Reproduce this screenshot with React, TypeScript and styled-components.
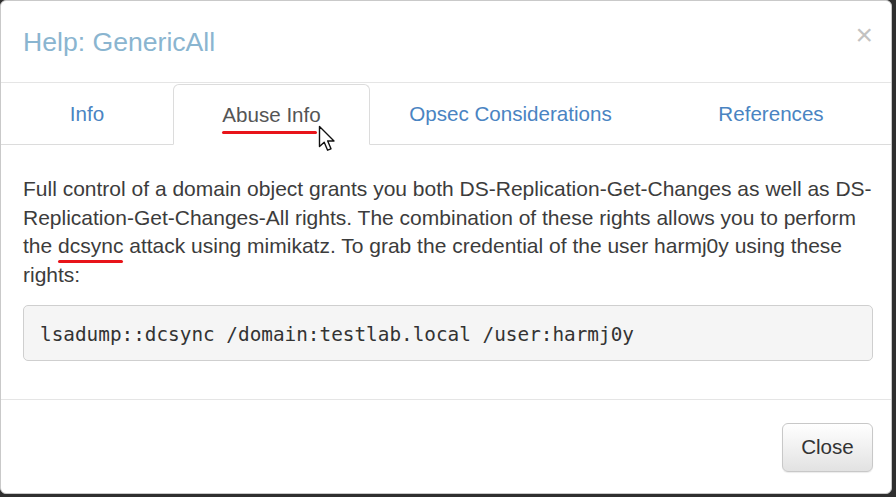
import React from "react";
import styled, { createGlobalStyle } from "styled-components";

const Global = createGlobalStyle`
  html, body { margin: 0; padding: 0; }
  body {
    background: #2f2f2f;
    font-family: "Liberation Sans", Arial, sans-serif;
    width: 896px;
    height: 497px;
    overflow: hidden;
  }
`;

const Modal = styled.div`
  position: relative;
  box-sizing: border-box;
  width: 892px;
  height: 494px;
  background: #fff;
  border: 1px solid #c9c9c9;
  border-radius: 6px;
  display: flex;
  flex-direction: column;
  overflow: hidden;
`;

const Header = styled.div`
  display: flex;
  align-items: center;
  justify-content: space-between;
  height: 81px;
  padding: 0 22px;
  border-bottom: 1px solid #e5e5e5;
`;

const Title = styled.h4`
  margin: 0;
  font-size: 26.6px;
  font-weight: 400;
  color: #8ab5d0;
  padding-top: 1px;
`;

const CloseX = styled.span`
  font-size: 30px;
  font-weight: 400;
  color: #c2c2c2;
  line-height: 1;
  margin-top: -13px;
  margin-right: -4px;
`;

const TabRow = styled.div`
  display: flex;
  height: 62px;
`;

const Tab = styled.div<{ $w?: number; $active?: boolean }>`
  box-sizing: border-box;
  ${(p) => (p.$w ? `width: ${p.$w}px;` : "flex: 1;")}
  display: flex;
  align-items: center;
  justify-content: center;
  font-size: 20.6px;
  color: ${(p) => (p.$active ? "#555" : "#4a84c2")};
  padding-top: 1px;
  ${(p) =>
    p.$active
      ? `
    border: 1px solid #dcdcdc;
    border-bottom-color: transparent;
    border-radius: 6px 6px 0 0;
    margin-top: 1px;
    position: relative;
  `
      : `border-bottom: 1px solid #dcdcdc;`}
`;

const Marked = styled.span<{ $inset?: number; $drop?: number }>`
  position: relative;
  &::after {
    content: "";
    position: absolute;
    left: 0;
    right: ${(p) => p.$inset ?? 0}px;
    bottom: ${(p) => p.$drop ?? -6}px;
    height: 3px;
    background: #e8141a;
    border-radius: 2px;
  }
`;

const Cursor = styled.svg`
  position: absolute;
  left: 144px;
  top: 40px;
`;

const Body = styled.div`
  flex: 1;
  padding: 30px 18px 0 22px;
  border-bottom: 1px solid #e5e5e5;
`;

const Para = styled.p`
  margin: 0 -14px 16px 0;
  font-size: 21px;
  line-height: 28.5px;
  color: #3c3c3c;
`;

const Pre = styled.pre`
  margin: 0;
  box-sizing: border-box;
  height: 56px;
  display: flex;
  align-items: center;
  padding: 2px 16px 0;
  background: #f5f5f5;
  border: 1px solid #cfcfcf;
  border-radius: 5px;
  font-family: "DejaVu Sans Mono", "Liberation Mono", monospace;
  font-size: 19.35px;
  color: #333;
`;

const Footer = styled.div`
  height: 93px;
  display: flex;
  align-items: center;
  justify-content: flex-end;
  padding: 0 18px 0 0;
  box-sizing: border-box;
`;

const Button = styled.button`
  box-sizing: border-box;
  width: 91px;
  height: 49px;
  margin-top: 1px;
  font-family: "Liberation Sans", Arial, sans-serif;
  font-size: 20.6px;
  color: #333;
  background: linear-gradient(to bottom, #ffffff 0%, #e2e2e2 100%);
  border: 1px solid #c8c8c8;
  border-radius: 6px;
  box-shadow: inset 0 1px 0 rgba(255, 255, 255, 0.15), 0 1px 1px rgba(0, 0, 0, 0.08);
`;

export default function App() {
  return (
    <>
      <Global />
      <Modal>
        <Header>
          <Title>Help: GenericAll</Title>
          <CloseX>×</CloseX>
        </Header>
        <TabRow>
          <Tab $w={172}>Info</Tab>
          <Tab $w={197} $active>
            <Marked $inset={4} $drop={-7}>Abuse Info</Marked>
            <Cursor width="20" height="28" viewBox="0 0 20 28">
              <path
                d="M1.5 1.5 L1.5 21.5 L6.2 17.2 L9.6 25.2 L13 23.8 L9.7 16 L16 16 Z"
                fill="#fff"
                stroke="#111"
                strokeWidth="1.4"
                strokeLinejoin="round"
              />
            </Cursor>
          </Tab>
          <Tab $w={281}>Opsec Considerations</Tab>
          <Tab>References</Tab>
        </TabRow>
        <Body>
          <Para>
            Full control of a domain object grants you both DS-Replication-Get-Changes as well as
            DS-Replication-Get-Changes-All rights. The combination of these rights allows you to
            perform the <Marked $drop={-6}>dcsync</Marked> attack using mimikatz. To grab the
            credential of the user harmj0y using these rights:
          </Para>
          <Pre>lsadump::dcsync /domain:testlab.local /user:harmj0y</Pre>
        </Body>
        <Footer>
          <Button>Close</Button>
        </Footer>
      </Modal>
    </>
  );
}
